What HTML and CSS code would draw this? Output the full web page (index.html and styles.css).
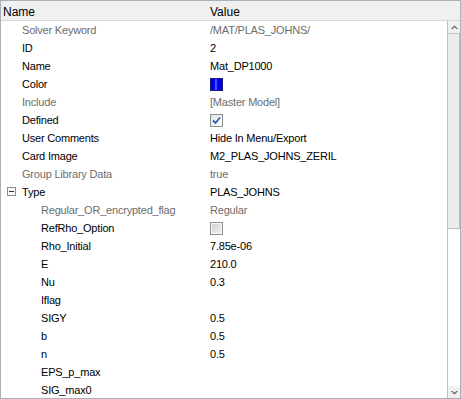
FILE: index.html
```html
<!DOCTYPE html>
<html>
<head>
<meta charset="utf-8">
<link rel="stylesheet" href="styles.css">
</head>
<body>
<div class="grid">
  <div class="header">
    <div class="hcell name-col">Name</div>
    <div class="hcell">Value</div>
  </div>
  <div class="body">
    <div class="rows">
      <div class="row dim"><div class="lbl">Solver Keyword</div><div class="val">/MAT/PLAS_JOHNS/</div></div>
      <div class="row"><div class="lbl">ID</div><div class="val">2</div></div>
      <div class="row"><div class="lbl">Name</div><div class="val">Mat_DP1000</div></div>
      <div class="row"><div class="lbl">Color</div><div class="val"><span class="swatch"></span></div></div>
      <div class="row dim"><div class="lbl">Include</div><div class="val">[Master Model]</div></div>
      <div class="row"><div class="lbl">Defined</div><div class="val"><span class="check on"><svg width="9" height="9" viewBox="0 0 9 9"><path d="M1 4.5 L3.5 7 L8 1.5" fill="none" stroke="#2a62a8" stroke-width="1.8"/></svg></span></div></div>
      <div class="row"><div class="lbl">User Comments</div><div class="val">Hide In Menu/Export</div></div>
      <div class="row"><div class="lbl">Card Image</div><div class="val">M2_PLAS_JOHNS_ZERIL</div></div>
      <div class="row dim"><div class="lbl">Group Library Data</div><div class="val">true</div></div>
      <div class="row"><div class="lbl"><span class="expander"><span class="minus"></span></span>Type</div><div class="val">PLAS_JOHNS</div></div>
      <div class="row dim sub"><div class="lbl">Regular_OR_encrypted_flag</div><div class="val">Regular</div></div>
      <div class="row sub"><div class="lbl">RefRho_Option</div><div class="val"><span class="check off"></span></div></div>
      <div class="row sub"><div class="lbl">Rho_Initial</div><div class="val">7.85e-06</div></div>
      <div class="row sub"><div class="lbl">E</div><div class="val">210.0</div></div>
      <div class="row sub"><div class="lbl">Nu</div><div class="val">0.3</div></div>
      <div class="row sub"><div class="lbl">Iflag</div><div class="val"></div></div>
      <div class="row sub"><div class="lbl">SIGY</div><div class="val">0.5</div></div>
      <div class="row sub"><div class="lbl">b</div><div class="val">0.5</div></div>
      <div class="row sub"><div class="lbl">n</div><div class="val">0.5</div></div>
      <div class="row sub"><div class="lbl">EPS_p_max</div><div class="val"></div></div>
      <div class="row sub"><div class="lbl">SIG_max0</div><div class="val"></div></div>
    </div>
    <div class="scrollbar">
      <div class="sbtn"><svg width="7" height="5" viewBox="0 0 7 5"><path d="M0 4 L3.5 0.5 L7 4 L5.5 4 L3.5 2 L1.5 4 Z" fill="#555"/></svg></div>
      <div class="track"><div class="thumb"></div></div>
      <div class="sbtn"><svg width="7" height="5" viewBox="0 0 7 5"><path d="M0 1 L3.5 4.5 L7 1 L5.5 1 L3.5 3 L1.5 1 Z" fill="#555"/></svg></div>
    </div>
  </div>
</div>
</body>
</html>
```

FILE: styles.css
```css
html, body {
  margin: 0;
  padding: 0;
  background: #ffffff;
}
body {
  font-family: "Liberation Sans", Arial, sans-serif;
  font-size: 11px;
  letter-spacing: -0.2px;
  color: #000;
}
.grid {
  width: 461px;
  height: 399px;
  box-sizing: border-box;
  border: 1px solid #a7b0bb;
  display: flex;
  flex-direction: column;
  overflow: hidden;
}
.header {
  height: 19px;
  flex: none;
  background: #f0f0f0;
  border-bottom: 1px solid #d8d8d8;
  display: flex;
  align-items: center;
  font-size: 12px;
  letter-spacing: 0;
}
.hcell {
  padding-left: 2px;
  padding-top: 2px;
}
.name-col {
  width: 205px;
}
.body {
  flex: 1;
  display: flex;
  min-height: 0;
}
.rows {
  flex: 1;
  overflow: hidden;
}
.row {
  height: 18px;
  display: grid;
  grid-template-columns: 208px 1fr;
  align-items: center;
  white-space: nowrap;
}
.lbl {
  padding-left: 21px;
  display: flex;
  align-items: center;
  position: relative;
}
.sub .lbl {
  padding-left: 40px;
}
.val {
  display: flex;
  align-items: center;
  padding-left: 1px;
}
.dim {
  color: #6d6d6d;
}
.swatch {
  width: 11px;
  height: 11px;
  border: 1px solid #1a1a80;
  background: linear-gradient(to right, #0000e0 0%, #0000f0 30%, #6a6aff 45%, #0000f0 60%, #0000d8 100%);
}
.check {
  width: 11px;
  height: 11px;
  border: 1px solid #8e8f8f;
  display: flex;
  align-items: center;
  justify-content: center;
}
.check.on {
  background: linear-gradient(135deg, #dfe6ee, #ffffff);
}
.check.off {
  background: linear-gradient(135deg, #cfcfcf, #f4f4f4);
  box-shadow: inset 0 0 0 1px #f8f8f8;
}
.expander {
  position: absolute;
  left: 6px;
  top: 50%;
  margin-top: -5px;
  width: 7px;
  height: 7px;
  border: 1px solid #919191;
  background: #fafafa;
  display: flex;
  align-items: center;
  justify-content: center;
}
.minus {
  width: 5px;
  height: 1px;
  background: #333;
}
.scrollbar {
  width: 12px;
  flex: none;
  display: flex;
  flex-direction: column;
  background: #ffffff;
  border-left: 1px solid #b8c0ca;
}
.sbtn {
  height: 12px;
  flex: none;
  display: flex;
  align-items: center;
  justify-content: center;
  background: #f0f0f0;
}
.track {
  flex: 1;
  background: #ffffff;
}
.thumb {
  height: 196px;
  box-sizing: border-box;
  border: 1px solid #b8c0ca;
  border-left: none;
  background: #ececec;
}
```
